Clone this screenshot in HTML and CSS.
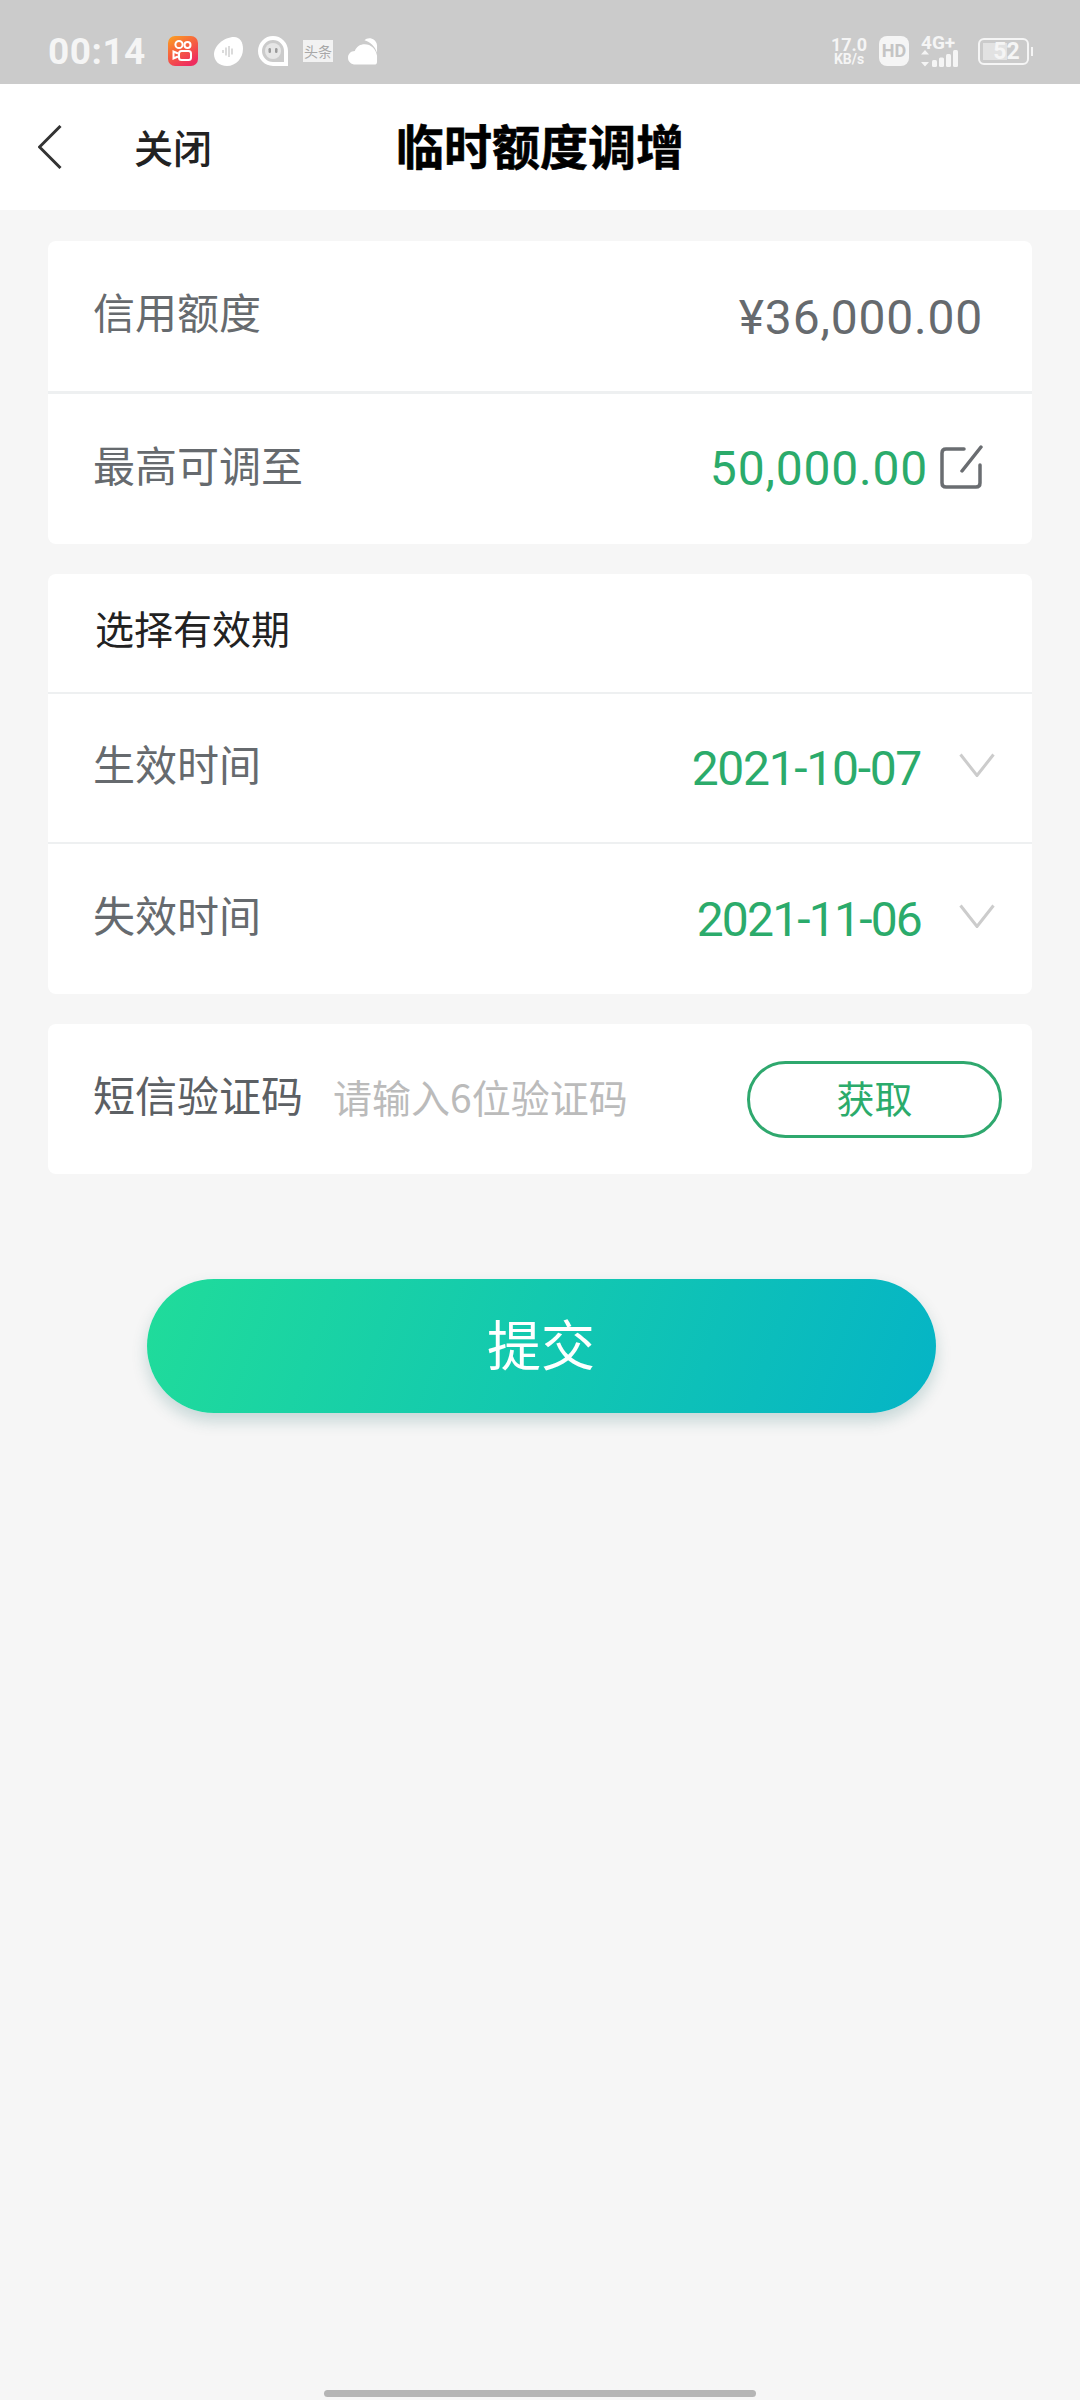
FILE: index.html
```html
<!DOCTYPE html>
<html lang="zh-CN">
<head>
  <meta charset="UTF-8">
  <meta name="viewport" content="width=device-width, initial-scale=1.0">
  <title>临时额度调增</title>
  <link rel="stylesheet" href="styles.css">
</head>
<body>
  <div class="page">
    <div class="status-bar">
      <div class="status-left">
        <span class="time">00:14</span>
        <svg class="app-icon" viewBox="0 0 30 30">
          <defs>
            <linearGradient id="ks" x1="0" y1="0" x2="0.6" y2="1">
              <stop offset="0" stop-color="#fca41f"/>
              <stop offset="0.45" stop-color="#f7683c"/>
              <stop offset="1" stop-color="#ee2d5e"/>
            </linearGradient>
          </defs>
          <rect width="30" height="30" rx="7" fill="url(#ks)"/>
          <circle cx="11" cy="8.500" r="3.600" fill="none" stroke="#fff" stroke-width="2"/>
          <circle cx="19.500" cy="9" r="3" fill="none" stroke="#fff" stroke-width="2"/>
          <rect x="11" y="15" width="12" height="9" rx="2.500" fill="none" stroke="#fff" stroke-width="2"/>
          <path d="M10 17.500 5.500 15.500v7L10 20.500" fill="none" stroke="#fff" stroke-width="2"/>
        </svg>
        <svg class="app-icon" viewBox="0 0 30 30">
          <path d="M1 18C1 10 11 1 21 1c6 0 9 5 9 12 0 9-7 17-16 17C6 30 1 25 1 18z" fill="#fff"/>
          <path d="M10 14v3M13 11.500v8M16 10v11M19 12.500v6" stroke="#c4c4c4" stroke-width="1.200"/>
        </svg>
        <svg class="app-icon" viewBox="0 0 30 30">
          <path d="M15 2C7.800 2 2 7.800 2 15s5.800 13 13 13h13V15C28 7.800 22.200 2 15 2z" fill="none" stroke="#fff" stroke-width="4"/>
          <circle cx="15" cy="15" r="8" fill="#e6e6e6"/>
          <rect x="10.500" y="12" width="2.500" height="5" rx="1.200" fill="#9a9a9a"/>
          <rect x="17" y="12" width="2.500" height="5" rx="1.200" fill="#9a9a9a"/>
        </svg>
        <span class="toutiao">头条</span>
        <svg class="app-icon cloud" viewBox="0 0 31 30">
          <path d="M17 4C20 0 29 1 30 9v8C28 10 23 6 17 4z" fill="#fff"/>
          <path d="M8 29C3 29 0 26 0 22c0-4 3-7 7-7 2-5 6-7 10-7 7 0 12 5 13 12v6c0 2-1 3-3 3H8z" fill="#fff"/>
        </svg>
      </div>
      <div class="status-right">
        <div class="speed">
          <span class="speed-num">17.0</span>
          <span class="speed-unit">KB/s</span>
        </div>
        <span class="hd">HD</span>
        <div class="signal">
          <span class="net">4G+</span>
          <svg class="bars" viewBox="0 0 37 17">
            <path d="M4 0 8 4.500H0zM4 16.500 0 12h8z" fill="#f5f5f5"/>
            <rect x="11" y="10" width="5" height="7" rx="1.500" fill="#f5f5f5"/>
            <rect x="18" y="7.500" width="5" height="9.500" rx="1.500" fill="#f5f5f5"/>
            <rect x="25" y="4" width="5" height="13" rx="1.500" fill="#f5f5f5"/>
            <rect x="32" y="0" width="5" height="17" rx="1.500" fill="#f5f5f5"/>
          </svg>
        </div>
        <div class="battery">
          <div class="battery-body">
            <span class="battery-fill"></span>
            <span class="battery-num">52</span>
          </div>
          <span class="battery-tip"></span>
        </div>
      </div>
    </div>

    <div class="nav-bar">
      <svg class="back" viewBox="0 0 24 44">
        <path d="M22.500 1 1.500 22l21 21" fill="none" stroke="#333" stroke-width="3"/>
      </svg>
      <span class="close">关闭</span>
      <h1 class="title">临时额度调增</h1>
    </div>

    <div class="content">
      <div class="card">
        <div class="row">
          <span class="label">信用额度</span>
          <span class="value gray">¥36,000.00</span>
        </div>
        <div class="row">
          <span class="label">最高可调至</span>
          <div class="value-wrap limit-wrap">
            <span class="value green">50,000.00</span>
            <svg class="edit" viewBox="0 0 43 44">
              <path d="M24 4H6Q2 4 2 8V38Q2 42 6 42H36Q40 42 40 38V20" fill="none" stroke="#6a6d71" stroke-width="3.500" stroke-linecap="round"/>
              <path d="M41 2 22 26" fill="none" stroke="#6a6d71" stroke-width="3.500" stroke-linecap="round"/>
            </svg>
          </div>
        </div>
      </div>

      <div class="card">
        <div class="row row-head">
          <span class="head-text">选择有效期</span>
        </div>
        <div class="row row-date">
          <span class="label">生效时间</span>
          <div class="value-wrap date-wrap">
            <span class="value date-wide green">2021-10-07</span>
            <svg class="arrow" viewBox="0 0 36 24">
              <path d="M1.500 1.500 18 22.500 34.500 1.500" fill="none" stroke="#ccc" stroke-width="3"/>
            </svg>
          </div>
        </div>
        <div class="row row-date">
          <span class="label">失效时间</span>
          <div class="value-wrap date-wrap">
            <span class="value date-narrow green">2021-11-06</span>
            <svg class="arrow" viewBox="0 0 36 24">
              <path d="M1.500 1.500 18 22.500 34.500 1.500" fill="none" stroke="#ccc" stroke-width="3"/>
            </svg>
          </div>
        </div>
      </div>

      <div class="card">
        <div class="row row-code">
          <span class="label label-code">短信验证码</span>
          <span class="placeholder">请输入6位验证码</span>
          <button class="get-btn">获取</button>
        </div>
      </div>

      <button class="submit">提交</button>
    </div>

    <div class="home-bar"></div>
  </div>
</body>
</html>
```

FILE: styles.css
```css
* {
  box-sizing: border-box;
}
body {
  margin: 0;
  background-color: #f6f6f6;
  font-family: "Noto Sans CJK SC", Roboto, sans-serif;
  color: #666a6e;
}
.page {
  display: flex;
  flex-direction: column;
  width: 1080px;
  height: 2400px;
}

/* status bar */
.status-bar {
  display: flex;
  justify-content: space-between;
  align-items: center;
  height: 84px;
  padding: 18px 47px 0 48px;
  background-color: #cbcbcb;
  color: #f5f5f5;
}
.status-left {
  display: flex;
  align-items: center;
}
.time {
  width: 120px;
  font-family: Roboto, sans-serif;
  font-size: 37px;
  font-weight: 700;
  letter-spacing: 0.5px;
}
.app-icon {
  width: 30px;
  height: 30px;
  margin-right: 15px;
}
.toutiao {
  width: 30px;
  height: 22px;
  margin-right: 15px;
  background-color: #f2f2f2;
  color: #a8a8a8;
  font-size: 14px;
  line-height: 22px;
  text-align: center;
  white-space: nowrap;
}
.cloud {
  margin-right: 0;
}
.status-right {
  display: flex;
  align-items: center;
  font-family: Roboto, sans-serif;
}
.speed {
  display: flex;
  flex-direction: column;
  align-items: center;
  width: 38px;
  margin-right: 11px;
  font-weight: 700;
}
.speed-num {
  font-size: 18px;
  line-height: 17px;
}
.speed-unit {
  font-size: 14px;
  line-height: 13px;
}
.hd {
  width: 30px;
  height: 30px;
  margin-right: 12px;
  border-radius: 8px;
  background-color: #f5f5f5;
  color: #c4c4c4;
  font-size: 18px;
  font-weight: 700;
  line-height: 30px;
  text-align: center;
}
.signal {
  display: flex;
  flex-direction: column;
  width: 37px;
  margin-right: 20px;
}
.net {
  font-size: 19px;
  font-weight: 700;
  line-height: 14px;
}
.bars {
  display: block;
  width: 37px;
  height: 17px;
}
.battery {
  display: flex;
  align-items: center;
}
.battery-body {
  position: relative;
  width: 51px;
  height: 27px;
  border: 2px solid #f5f5f5;
  border-radius: 6px;
  font-size: 23px;
  font-weight: 700;
  line-height: 23px;
  text-align: center;
}
.battery-fill {
  position: absolute;
  top: 3px;
  bottom: 3px;
  left: 3px;
  width: 24px;
  background-color: #e2e2e2;
}
.battery-num {
  position: relative;
  padding-left: 6px;
}
.battery-tip {
  width: 2px;
  height: 9px;
  margin-left: 2px;
  background-color: #f5f5f5;
}

/* nav */
.nav-bar {
  position: relative;
  display: flex;
  align-items: center;
  height: 126px;
  padding-left: 38px;
  background-color: #fff;
}
.back {
  width: 24px;
  height: 44px;
}
.close {
  margin-left: 72px;
  margin-bottom: 3px;
  color: #222;
  font-size: 39px;
  font-weight: 500;
}
.title {
  position: absolute;
  left: 0;
  right: 0;
  margin: 0;
  padding-bottom: 6px;
  color: #000;
  font-size: 48px;
  font-weight: 700;
  -webkit-text-stroke: 0.6px #000;
  text-align: center;
}

/* cards */
.content {
  display: flex;
  flex-direction: column;
  flex: 1;
  gap: 30px;
  padding: 31px 48px 0 48px;
}
.card {
  border-radius: 8px;
  background-color: #fff;
}
.row {
  display: flex;
  justify-content: space-between;
  align-items: center;
  height: 150px;
  padding: 0 49px 0 45px;
}
.row + .row {
  height: 153px;
  border-top: 3px solid #eef0f1;
}
.label {
  margin-bottom: 11px;
  font-size: 42px;
  font-weight: 400;
}
.label-code {
  color: #5c6064;
}
.value {
  font-family: Roboto, sans-serif;
  font-size: 48px;
  letter-spacing: 0.8px;
}
.date-wide {
  letter-spacing: -1.3px;
}
.date-narrow {
  letter-spacing: -1.8px;
}
.gray {
  margin-top: 2px;
  color: #666a6e;
}
.green {
  color: #2bab6b;
}
.value-wrap {
  display: flex;
  align-items: center;
}
.limit-wrap {
  margin-bottom: 2px;
}
.edit {
  width: 43px;
  height: 44px;
  margin-left: 12px;
  margin-bottom: 2px;
}
.row-head {
  height: 118px;
  padding-left: 47px;
}
.head-text {
  margin-bottom: 12px;
  color: #222;
  font-size: 39px;
}
.row + .row-date {
  height: 150px;
  border-top-width: 2px;
  padding-right: 37px;
}
.row + .row-date + .row-date {
  height: 152px;
}
.date-wrap {
  gap: 38px;
}
.arrow {
  width: 36px;
  height: 24px;
  margin-bottom: 6px;
}
.row-code {
  justify-content: flex-start;
  padding-right: 30px;
}
.placeholder {
  margin-left: 30px;
  margin-bottom: 6px;
  color: #bbb;
  font-size: 39px;
}
.get-btn {
  width: 255px;
  height: 77px;
  margin-left: auto;
  padding: 0 0 6px;
  border: 3.500px solid #2fa86e;
  border-radius: 39px;
  background-color: #fff;
  color: #2bab6b;
  font-family: inherit;
  font-size: 38px;
}
.submit {
  align-self: center;
  width: 789px;
  height: 134px;
  margin-top: 75px;
  margin-left: 2px;
  padding: 0 0 8px;
  border: none;
  border-radius: 67px;
  background: linear-gradient(110deg, #20dc9a, #05b4c6);
  box-shadow: 0 8px 16px rgba(0, 90, 90, 0.2);
  color: #fff;
  font-family: inherit;
  font-size: 54px;
}
.home-bar {
  align-self: center;
  width: 432px;
  height: 7px;
  margin-bottom: 3px;
  border-radius: 4px;
  background-color: #b5b5b5;
}
```
